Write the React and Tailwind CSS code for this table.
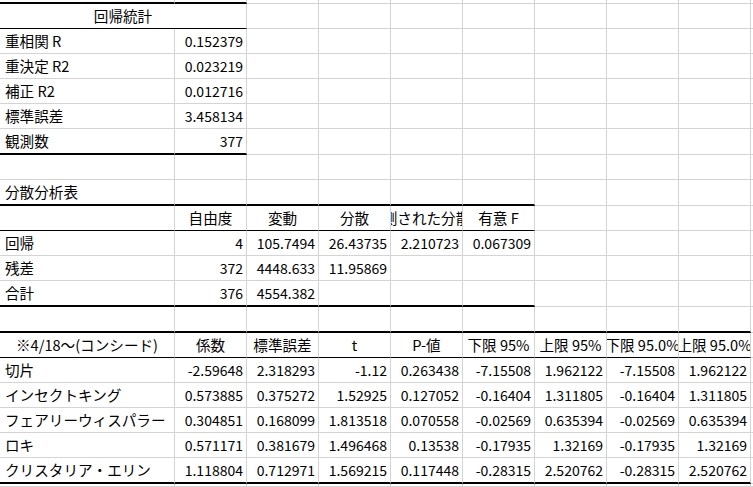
import React from 'react';

const W = ['w-[175px]', 'w-[72px]', 'w-[72px]', 'w-[72px]', 'w-[72px]', 'w-[72px]', 'w-[72px]', 'w-[72px]', 'w-[72px]', 'w-[3px]'];
const H = { 3: 'h-[3px]', 4: 'h-[4px]', 25: 'h-[25px]', 26: 'h-[26px]' };

const L = (t) => ({ t, a: 'l' });
const R = (t) => ({ t, a: 'r' });
const C = (t) => ({ t, a: 'c' });

// each row: height, kind of bottom line, how many columns carry the black line
const rows = [
  { h: 4, line: 'thick', span: 2 },
  { h: 25, line: 'thin', span: 2, merged: true, cells: [C('回帰統計')] },
  { h: 25, cells: [L('重相関 R'), R('0.152379')] },
  { h: 25, cells: [L('重決定 R2'), R('0.023219')] },
  { h: 25, cells: [L('補正 R2'), R('0.012716')] },
  { h: 25, cells: [L('標準誤差'), R('3.458134')] },
  { h: 26, line: 'thick', span: 2, cells: [L('観測数'), R('377')] },
  { h: 25 },
  { h: 26, line: 'thick', span: 6, cells: [L('分散分析表')] },
  { h: 25, line: 'thin', span: 6, cells: [C(''), C('自由度'), C('変動'), C('分散'), C('観測された分散比'), C('有意 F')] },
  { h: 25, cells: [L('回帰'), R('4'), R('105.7494'), R('26.43735'), R('2.210723'), R('0.067309')] },
  { h: 25, cells: [L('残差'), R('372'), R('4448.633'), R('11.95869')] },
  { h: 26, line: 'thick', span: 6, cells: [L('合計'), R('376'), R('4554.382')] },
  { h: 26, line: 'thick', span: 9 },
  {
    h: 25, line: 'thin', span: 9,
    cells: [C('※4/18～(コンシード)'), C('係数'), C('標準誤差'), C('t'), C('P-値'), C('下限 95%'), C('上限 95%'), C('下限 95.0%'), C('上限 95.0%')],
  },
  { h: 25, cells: [L('切片'), R('-2.59648'), R('2.318293'), R('-1.12'), R('0.263438'), R('-7.15508'), R('1.962122'), R('-7.15508'), R('1.962122')] },
  { h: 25, cells: [L('インセクトキング'), R('0.573885'), R('0.375272'), R('1.52925'), R('0.127052'), R('-0.16404'), R('1.311805'), R('-0.16404'), R('1.311805')] },
  { h: 25, cells: [L('フェアリーウィスパラー'), R('0.304851'), R('0.168099'), R('1.813518'), R('0.070558'), R('-0.02569'), R('0.635394'), R('-0.02569'), R('0.635394')] },
  { h: 25, cells: [L('ロキ'), R('0.571171'), R('0.381679'), R('1.496468'), R('0.13538'), R('-0.17935'), R('1.32169'), R('-0.17935'), R('1.32169')] },
  { h: 26, line: 'thick', span: 9, cells: [L('クリスタリア・エリン'), R('1.118804'), R('0.712971'), R('1.569215'), R('0.117448'), R('-0.28315'), R('2.520762'), R('-0.28315'), R('2.520762')] },
  { h: 3 },
];

const bottomClass = (line, black) => {
  if (!black) return 'border-b border-b-[#d4d4d4]';
  return line === 'thick' ? 'border-b-2 border-b-black' : 'border-b border-b-black';
};

const Cell = ({ w, h, bottom, cell }) => {
  const align =
    cell?.a === 'r' ? 'justify-end pr-[3px] text-[14px]' : cell?.a === 'c' ? 'justify-center text-[14.6px]' : 'justify-start pl-[5px] text-[14.6px]';
  return (
    <div className={`${w} ${H[h]} ${bottom} shrink-0 box-border flex items-center overflow-hidden whitespace-nowrap border-r border-r-[#d4d4d4] ${align}`}>
      {cell?.t ? <span className="shrink-0 leading-none">{cell.t}</span> : null}
    </div>
  );
};

const Row = ({ h, line = 'gray', span = 0, merged, cells = [] }) => {
  const out = [];
  for (let i = 0; i < W.length; i++) {
    if (merged && i === 0) {
      out.push(<Cell key={i} w="w-[247px]" h={h} bottom={bottomClass(line, true)} cell={cells[0]} />);
      i = 1;
      continue;
    }
    out.push(<Cell key={i} w={W[i]} h={h} bottom={bottomClass(line, i < span)} cell={cells[i]} />);
  }
  return <div className="flex">{out}</div>;
};

export default function App() {
  return (
    <div className="w-[753px] h-[487px] overflow-hidden bg-white text-black font-['Noto_Sans_CJK_JP',sans-serif]">
      {rows.map((r, i) => (
        <Row key={i} {...r} />
      ))}
    </div>
  );
}
